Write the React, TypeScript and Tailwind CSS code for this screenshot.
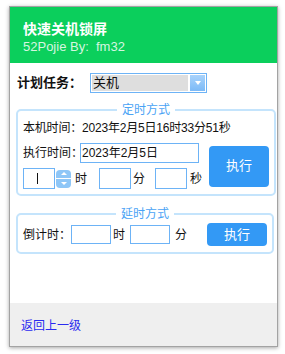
import { ReactNode } from 'react'

function Box({ className = '', children }: { className?: string; children?: ReactNode }) {
  return (
    <div className={`flex items-center border border-[#6db3f6] bg-white ${className}`}>
      {children}
    </div>
  )
}

function Group({ title, children, className = '' }: { title: string; children: ReactNode; className?: string }) {
  return (
    <fieldset className={`rounded-[5px] border-2 border-[#c4e4fc] ${className}`}>
      <legend className="mx-auto px-[5px] text-[12px] leading-[14px] text-[#4aa3f5]">{title}</legend>
      {children}
    </fieldset>
  )
}

export default function App() {
  return (
    <div className="h-[354px] w-[285px] bg-white pl-[9px] pt-[6px] font-['Liberation_Sans','Noto_Sans_CJK_SC',sans-serif] leading-[14px] text-[#111]">
      <div className="flex h-[341px] w-[269px] flex-col border border-[#a3a3a3] shadow-[0_1px_4px_rgba(0,0,0,0.35)]">
        <div className="h-[56px] bg-[#0bcf5c] pl-[13px] pt-[14px]">
          <div className="text-[14px] font-bold leading-[16px] text-white">快速关机锁屏</div>
          <div className="mt-[3px] text-[13px] leading-[14px] text-[#d6f6e0]">52Pojie By:&nbsp; fm32</div>
        </div>

        <div className="flex-1 pl-[6px] pr-[3px] pt-[10px]">
          <div className="flex h-[20px] items-center pl-[1px]">
            <span className="w-[73px] text-[13px] font-bold">计划任务：</span>
            <div className="flex h-[20px] w-[117px] border border-[#6db3f6] bg-white p-[1px]">
              <div className="flex flex-1 items-center bg-[#dedede] pl-[1px] text-[13px]">关机</div>
              <div className="ml-[2px] flex w-[15px] items-center justify-center bg-gradient-to-b from-[#a9d3fb] to-[#7cbaf7]">
                <svg width="6" height="4" viewBox="0 0 6 4">
                  <path d="M0 0h6L3 4z" fill="#fff" />
                </svg>
              </div>
            </div>
          </div>

          <Group title="定时方式" className="mt-[10px] pb-[5px] pl-[5px] pr-[5px]">
            <div className="mt-[4px] whitespace-nowrap text-[12px] tracking-[-0.2px]">本机时间：2023年2月5日16时33分51秒</div>
            <div className="mt-[8px] flex items-center">
              <div className="flex-1">
                <div className="flex items-center text-[12px]">
                  <span className="w-[57px] whitespace-nowrap">执行时间：</span>
                  <Box className="h-[20px] w-[119px] pl-[1px]">2023年2月5日</Box>
                </div>
                <div className="mt-[5px] flex items-center text-[12px]">
                  <Box className="h-[21px] w-[32px] pl-[13px]">
                    <div className="h-[11px] w-[1px] bg-[#111]" />
                  </Box>
                  <div className="ml-[1px] flex h-[18px] w-[15px] flex-col gap-[1px]">
                    <div className="flex flex-1 items-center justify-center rounded-t-[4px] bg-[#8ec6f7]">
                      <svg width="6" height="3" viewBox="0 0 6 3"><path d="M0 3L3 0l3 3z" fill="#fff" /></svg>
                    </div>
                    <div className="flex flex-1 items-center justify-center rounded-b-[4px] bg-[#8ec6f7]">
                      <svg width="6" height="3" viewBox="0 0 6 3"><path d="M0 0h6L3 3z" fill="#fff" /></svg>
                    </div>
                  </div>
                  <span className="ml-[4px] w-[24px]">时</span>
                  <Box className="h-[21px] w-[32px]" />
                  <span className="ml-[2px] w-[22px]">分</span>
                  <Box className="h-[21px] w-[32px]" />
                  <span className="ml-[3px]">秒</span>
                </div>
              </div>
              <button className="ml-[7px] flex h-[41px] w-[60px] items-center justify-center rounded-[4px] bg-[#3399f5] text-[13px] text-white">
                执行
              </button>
            </div>
          </Group>

          <Group title="延时方式" className="mt-[11px] pb-[6px] pl-[5px] pr-[5px] pt-[2px]">
            <div className="flex items-center text-[12px]">
              <span className="w-[48px] whitespace-nowrap">倒计时：</span>
              <Box className="h-[19px] w-[40px]" />
              <span className="ml-[2px] w-[17px]">时</span>
              <Box className="h-[19px] w-[40px]" />
              <span className="ml-[5px]">分</span>
              <button className="ml-auto flex h-[23px] w-[60px] items-center justify-center rounded-[4px] bg-[#3399f5] text-[13px] text-white">
                执行
              </button>
            </div>
          </Group>
        </div>

        <div className="h-[43px] bg-[#efefef] pl-[11px] pt-[16px] text-[12px] leading-[14px]">
          <a className="text-[#2b2bf0]">返回上一级</a>
        </div>
      </div>
    </div>
  )
}
